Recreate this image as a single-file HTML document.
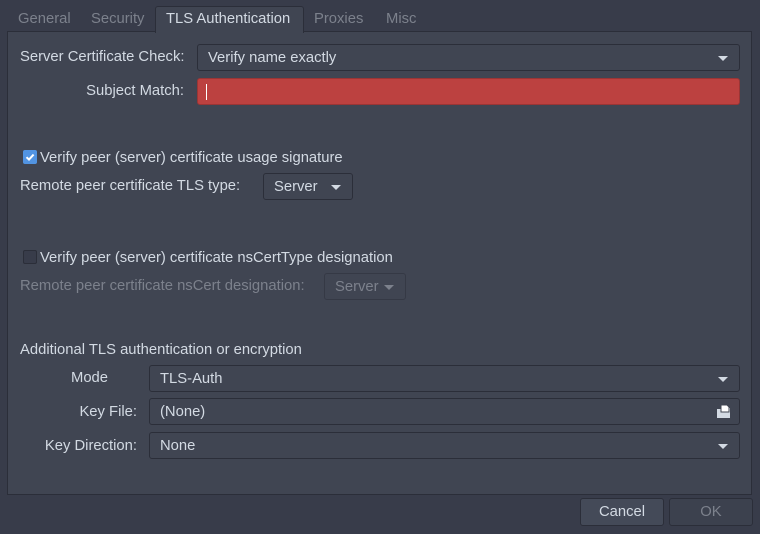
<!DOCTYPE html>
<html><head><style>
body{margin:0;width:760px;height:534px;background:#383c4a;font-family:"Liberation Sans",sans-serif;font-size:14.8px;color:#d3dae3;position:relative;overflow:hidden}
.a{position:absolute;white-space:nowrap}
.t{line-height:18px}
.box{position:absolute;box-sizing:border-box;background:#404552;border:1px solid #2b2e39;border-radius:3px}
.box span{position:absolute;left:10px;top:4px;line-height:18px}
.arr{position:absolute;right:11px;top:11px;width:0;height:0;border-left:5px solid transparent;border-right:5px solid transparent;border-top:5px solid #d3dae3}
.dis{color:#7c818c}
</style></head><body>
<div class="a" style="left:7px;top:31px;width:745px;height:464px;box-sizing:border-box;border:1px solid #2b2e39;background:#404552"></div>
<div class="a" style="left:155px;top:6px;width:149px;height:27px;box-sizing:border-box;border:1px solid #2b2e39;border-bottom:none;background:#404552;border-radius:3px 3px 0 0"></div>
<div class="a t dis" style="left:18px;top:10px">General</div>
<div class="a t dis" style="left:91px;top:10px">Security</div>
<div class="a t" style="left:166px;top:10px">TLS Authentication</div>
<div class="a t dis" style="left:314px;top:10px">Proxies</div>
<div class="a t dis" style="left:386px;top:10px">Misc</div>

<div class="a t" style="left:20px;top:48px">Server Certificate Check:</div>
<div class="box" style="left:197px;top:44px;width:543px;height:27px"><span>Verify name exactly</span><i class="arr"></i></div>
<div class="a t" style="right:576px;top:82px">Subject Match:</div>
<div class="box" style="left:197px;top:78px;width:543px;height:27px;background:#bc4140;border-color:#9a3535"><i style="position:absolute;left:8px;top:5px;width:1px;height:16px;background:#fff"></i></div>

<div class="a" style="left:23px;top:150px;width:14px;height:14px;background:#5294e2;border-radius:2px"><svg width="14" height="14"><path d="M3.5 7.2L6 9.6L10.6 4.6" stroke="#fff" stroke-width="2" fill="none"/></svg></div>
<div class="a t" style="left:40px;top:149px">Verify peer (server) certificate usage signature</div>
<div class="a t" style="left:20px;top:177px">Remote peer certificate TLS type:</div>
<div class="box" style="left:263px;top:173px;width:90px;height:27px"><span>Server</span><i class="arr"></i></div>

<div class="a" style="left:23px;top:250px;width:14px;height:14px;box-sizing:border-box;background:#383c4a;border:1px solid #2b2e39;border-radius:2px"></div>
<div class="a t" style="left:40px;top:249px">Verify peer (server) certificate nsCertType designation</div>
<div class="a t dis" style="left:20px;top:277px">Remote peer certificate nsCert designation:</div>
<div class="box dis" style="left:324px;top:273px;width:82px;height:27px;background:#404552;border-color:#353945"><span>Server</span><i class="arr" style="border-top-color:#7c818c"></i></div>

<div class="a t" style="left:20px;top:341px">Additional TLS authentication or encryption</div>
<div class="a t" style="left:71px;top:369px">Mode</div>
<div class="box" style="left:149px;top:365px;width:591px;height:27px"><span>TLS-Auth</span><i class="arr"></i></div>
<div class="a t" style="right:623px;top:403px">Key File:</div>
<div class="box" style="left:149px;top:398px;width:591px;height:27px"><span>(None)</span>
<svg style="position:absolute;right:7px;top:5px" width="16" height="16"><path d="M1 5h4l1-1h8v10H1z" fill="#d3dae3"/><path d="M5 1h6l2 2v5H5z" fill="#fff" stroke="#404552"/></svg></div>
<div class="a t" style="right:623px;top:437px">Key Direction:</div>
<div class="box" style="left:149px;top:432px;width:591px;height:27px"><span>None</span><i class="arr"></i></div>

<div class="box" style="left:580px;top:498px;width:84px;height:28px;background:#444a58"><span style="left:0;width:82px;text-align:center;top:4px">Cancel</span></div>
<div class="box dis" style="left:669px;top:498px;width:84px;height:28px;background:#3c414e"><span style="left:0;width:82px;text-align:center;top:4px">OK</span></div>
</body></html>
